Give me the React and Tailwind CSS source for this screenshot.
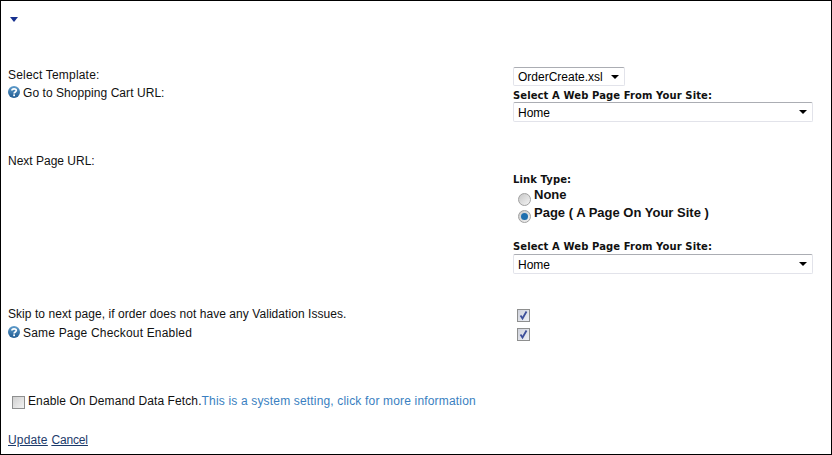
const font = "font-['Liberation_Sans',Arial,sans-serif]";
const label = "font-['DejaVu_Sans',Verdana,sans-serif] font-bold text-[10px] tracking-[0.1px] pt-[1px]";

function Help() {
  return (
    <svg width="12" height="12" viewBox="0 0 12 12" className="shrink-0">
      <defs>
        <linearGradient id="h" x1="0" y1="0" x2="0" y2="1">
          <stop offset="0" stopColor="#5f9ccb" />
          <stop offset="1" stopColor="#1e5a92" />
        </linearGradient>
      </defs>
      <circle cx="6" cy="6" r="6" fill="url(#h)" />
      <path d="M3.9 4.6 C3.9 2.3 8.3 2.3 8.3 4.6 C8.3 6 6.1 5.9 6.1 7.5" fill="none" stroke="#fff" strokeWidth="1.7" />
      <rect x="5.2" y="8.4" width="1.8" height="1.8" fill="#fff" />
    </svg>
  );
}

function Select({ label, w, h = "h-[20px]" }) {
  return (
    <div className={`flex items-center justify-between ${h} ${w} bg-white border border-[#e2e3ea] border-t-[#abadb3] rounded-[2px] pl-[4px] pr-[5px] text-[12px] text-black`}>
      <span className="pt-[1px]">{label}</span>
      <span className="w-0 h-0 border-x-[4px] border-x-transparent border-t-[4px] border-t-black" />
    </div>
  );
}

function Check() {
  return (
    <span className="w-[13px] h-[13px] border border-[#8e8f8f] bg-linear-to-br from-[#cfd2dc] to-[#eef0f5] flex items-center justify-center">
      <svg width="11" height="11" viewBox="0 0 11 11">
        <path d="M2.5 5.5 L4.5 8.5 L8.5 1.5" fill="none" stroke="#3d4f9a" strokeWidth="1.8" />
      </svg>
    </span>
  );
}

function Radio({ on, mt }) {
  return (
    <span className={`w-[13px] h-[13px] rounded-full border border-[#a0a0a0] bg-linear-to-br from-[#c8c8c8] to-[#f4f4f4] flex items-center justify-center ${mt}`}>
      {on && <span className="w-[7px] h-[7px] rounded-full bg-[#1f6fae]" />}
    </span>
  );
}

export default function App() {
  return (
    <div className={`${font} w-[832px] h-[455px] overflow-hidden bg-white border border-black pl-[7px] text-[12px] leading-[14px] text-[#111]`}>
      <div className="h-[66px] pt-[16px] pl-[2px]">
        <span className="block w-0 h-0 border-x-[4.5px] border-x-transparent border-t-[5px] border-t-[#16308f]" />
      </div>
      <div className="grid grid-cols-[505px_1fr]">
        <div className="h-[19px] pt-[1px] tracking-[0.19px]">Select Template:</div>
        <div className="h-[19px]"><Select label="OrderCreate.xsl" w="w-[112px]" h="h-[19px]" /></div>

        <div className="h-[68px] flex items-start gap-[3px]"><Help /><span className="tracking-[0.06px]">Go to Shopping Cart URL:</span></div>
        <div className="h-[68px] pt-[2px]">
          <div className={`${label} h-[14px]`}>Select A Web Page From Your Site:</div>
          <Select label="Home" w="w-[300px]" />
        </div>

        <div className="h-[152px]">Next Page URL:</div>
        <div className="h-[152px] pt-[18px]">
          <div className={`${label} h-[15px]`}>Link Type:</div>
          <div className="flex gap-[3px] pl-[5px] pt-[1px] h-[18px] font-bold text-[13px]"><Radio mt="mt-[5px]" /><span>None</span></div>
          <div className="flex gap-[3px] pl-[5px] pt-[1px] h-[34px] font-bold text-[13px]"><Radio on mt="mt-[4px]" /><span>Page ( A Page On Your Site )</span></div>
          <div className={`${label} h-[15px]`}>Select A Web Page From Your Site:</div>
          <Select label="Home" w="w-[300px]" />
        </div>

        <div className="h-[19px] pt-[1px] tracking-[0.06px]">Skip to next page, if order does not have any Validation Issues.</div>
        <div className="h-[19px] pl-[4px] pt-[3px]"><Check /></div>

        <div className="h-[69px] pt-[1px] flex items-start gap-[3px]"><Help /><span className="tracking-[0.19px]">Same Page Checkout Enabled</span></div>
        <div className="h-[69px] pl-[4px] pt-[3px]"><Check /></div>
      </div>
      <div className="flex items-start h-[39px] pl-[4px]">
        <span className="w-[13px] h-[13px] mt-[2px] border border-[#8e8f8f] bg-linear-to-br from-[#d0d0d0] to-[#f2f2f2] mr-[3px]" />
        <span className="tracking-[0.1px]">Enable On Demand Data Fetch.</span>
        <a className="text-[#3a7fc1] tracking-[0.17px]">This is a system setting, click for more information</a>
      </div>
      <div className="flex gap-[4px] text-[#1c3a6b] underline">
        <a className="tracking-[0.15px]">Update</a>
        <a className="tracking-[-0.2px]">Cancel</a>
      </div>
    </div>
  );
}
